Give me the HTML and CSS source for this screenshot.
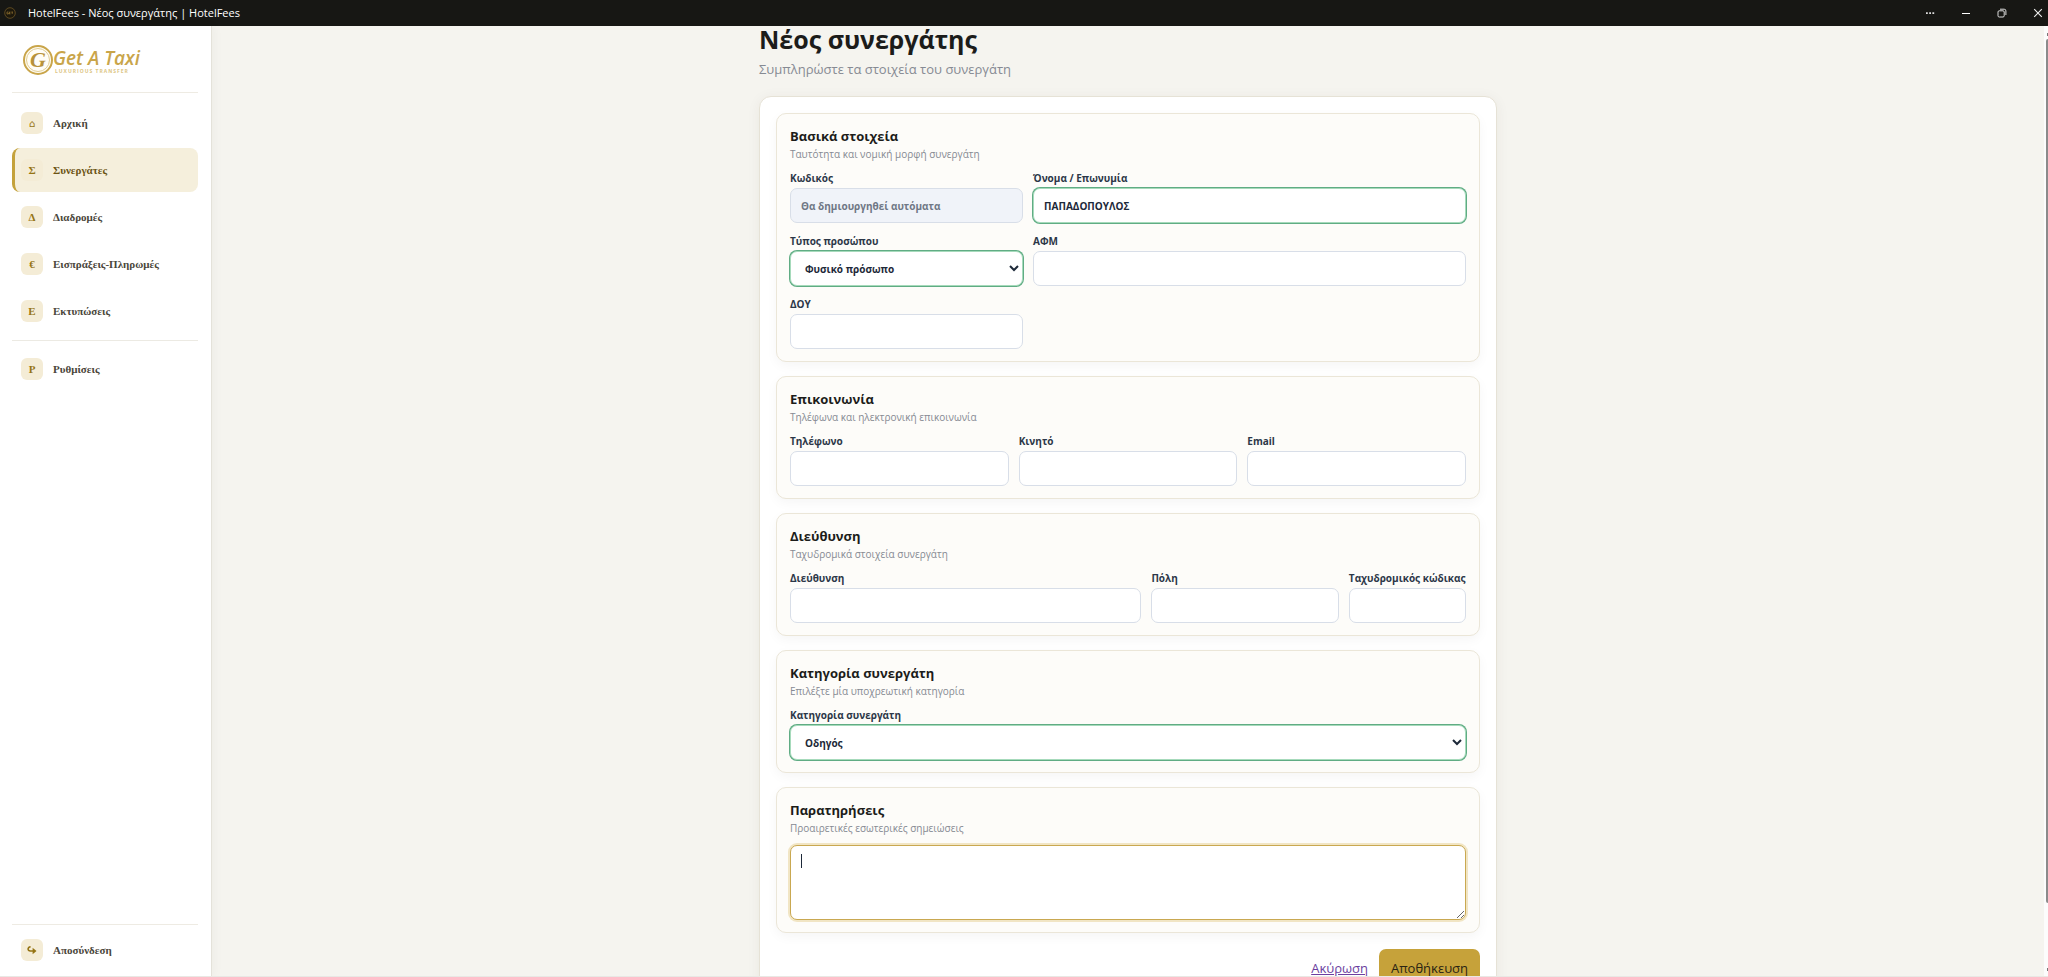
FILE: index.html
```html
<!DOCTYPE html>
<html lang="el">
<head>
<meta charset="utf-8">
<title>HotelFees - Νέος συνεργάτης | HotelFees</title>
<link rel="stylesheet" href="styles.css">
</head>
<body>
<div class="window">
  <header class="titlebar">
    <svg class="app-icon" viewBox="0 0 12 12" width="12" height="12" aria-hidden="true"><circle cx="6" cy="6" r="5.3" fill="#1d180c" stroke="#6d5626" stroke-width=".8"/><path d="M3 5h1.4M3 5v2h1.4V6M5.4 5v2M5.4 5h1M5.4 6h1M5.4 7h1M7.4 5H9M8.2 5v2" fill="none" stroke="#a8853a" stroke-width=".6"/></svg>
    <span class="window-title">HotelFees - Νέος συνεργάτης | HotelFees</span>
    <button class="win-btn" aria-label="Περισσότερα"><svg width="12" height="12" viewBox="0 0 12 12"><path d="M2 5.200h1.800v1.800H2zM5.200 5.200h1.800v1.800H5.200zM8.400 5.200h1.800v1.800H8.400z" fill="#ddd"/></svg></button>
    <button class="win-btn" aria-label="Ελαχιστοποίηση"><svg width="12" height="12" viewBox="0 0 12 12"><path d="M2 6.500h8" stroke="#fff"/></svg></button>
    <button class="win-btn" aria-label="Επαναφορά"><svg width="12" height="12" viewBox="0 0 12 12"><path d="M2 5a1.200 1.200 0 0 1 1.200-1.200H7A1.200 1.200 0 0 1 8.200 5v3.800A1.200 1.200 0 0 1 7 10H3.200A1.200 1.200 0 0 1 2 8.800zM4 2.200h4.200a1.700 1.700 0 0 1 1.700 1.700V8" fill="none" stroke="#ddd"/></svg></button>
    <button class="win-btn" aria-label="Κλείσιμο"><svg width="12" height="12" viewBox="0 0 12 12"><path d="M2.200 2.200l7.600 7.600M9.800 2.200L2.200 9.800" stroke="#eee" stroke-width="1.100"/></svg></button>
  </header>
  <div class="shell">
    <aside class="sidebar">
      <a class="brand" href="#" aria-label="Get A Taxi">
        <svg width="122" height="32" viewBox="0 0 122 32">
          <circle cx="16" cy="16" r="14" fill="#fffdf6" stroke="#c9a54a" stroke-width="2"/>
          <circle cx="16" cy="16" r="11.500" fill="none" stroke="#e2cd92" stroke-width="1"/>
          <text class="logo-g" x="16" y="23" text-anchor="middle">G</text>
          <text class="logo-name" x="31" y="21">Get A Taxi</text>
          <text class="logo-sub" x="33" y="29">LUXURIOUS TRANSFER</text>
        </svg>
      </a>
      <nav class="nav">
        <a class="nav-item" href="#"><span class="nav-icon home">⌂</span>Αρχική</a>
        <a class="nav-item active" href="#" aria-current="page"><span class="nav-icon">Σ</span>Συνεργάτες</a>
        <a class="nav-item" href="#"><span class="nav-icon">Δ</span>Διαδρομές</a>
        <a class="nav-item" href="#"><span class="nav-icon">€</span>Εισπράξεις-Πληρωμές</a>
        <a class="nav-item" href="#"><span class="nav-icon">Ε</span>Εκτυπώσεις</a>
        <hr class="nav-line">
        <a class="nav-item" href="#"><span class="nav-icon">Ρ</span>Ρυθμίσεις</a>
      </nav>
      <div class="sidebar-foot">
        <a class="nav-item" href="#"><span class="nav-icon"><svg width="10" height="10" viewBox="0 0 10 10"><path d="M3.600 1.700C.3 2.200.3 6 3.400 6H7" fill="none" stroke="#957414" stroke-width="1.600"/><path d="M5.600 2.800L9.500 6 5.600 9.200z" fill="#957414"/></svg></span>Αποσύνδεση</a>
      </div>
    </aside>
    <main class="main">
      <div class="page">
        <h1 class="page-title">Νέος συνεργάτης</h1>
        <p class="page-sub">Συμπληρώστε τα στοιχεία του συνεργάτη</p>
        <form class="card">
          <section class="section">
            <h2 class="section-title">Βασικά στοιχεία</h2>
            <p class="section-sub">Ταυτότητα και νομική μορφή συνεργάτη</p>
            <div class="grid grid-basic">
              <div class="field"><label class="label" for="code">Κωδικός</label><input class="control locked" id="code" value="Θα δημιουργηθεί αυτόματα" readonly></div>
              <div class="field"><label class="label" for="name">Όνομα / Επωνυμία</label><input class="control valid" id="name" value="ΠΑΠΑΔΟΠΟΥΛΟΣ"></div>
              <div class="field"><label class="label" for="kind">Τύπος προσώπου</label><select class="control valid" id="kind"><option>Φυσικό πρόσωπο</option></select></div>
              <div class="field"><label class="label" for="afm">ΑΦΜ</label><input class="control" id="afm"></div>
              <div class="field"><label class="label" for="doy">ΔΟΥ</label><input class="control" id="doy"></div>
            </div>
          </section>
          <section class="section">
            <h2 class="section-title">Επικοινωνία</h2>
            <p class="section-sub">Τηλέφωνα και ηλεκτρονική επικοινωνία</p>
            <div class="grid grid-contact">
              <div class="field"><label class="label" for="phone">Τηλέφωνο</label><input class="control" id="phone"></div>
              <div class="field"><label class="label" for="mobile">Κινητό</label><input class="control" id="mobile"></div>
              <div class="field"><label class="label" for="email">Email</label><input class="control" id="email" type="email"></div>
            </div>
          </section>
          <section class="section">
            <h2 class="section-title">Διεύθυνση</h2>
            <p class="section-sub">Ταχυδρομικά στοιχεία συνεργάτη</p>
            <div class="grid grid-address">
              <div class="field"><label class="label" for="street">Διεύθυνση</label><input class="control" id="street"></div>
              <div class="field"><label class="label" for="city">Πόλη</label><input class="control" id="city"></div>
              <div class="field"><label class="label" for="zip">Ταχυδρομικός κώδικας</label><input class="control" id="zip"></div>
            </div>
          </section>
          <section class="section">
            <h2 class="section-title">Κατηγορία συνεργάτη</h2>
            <p class="section-sub">Επιλέξτε μία υποχρεωτική κατηγορία</p>
            <div class="field"><label class="label" for="category">Κατηγορία συνεργάτη</label><select class="control valid" id="category"><option>Οδηγός</option></select></div>
          </section>
          <section class="section">
            <h2 class="section-title">Παρατηρήσεις</h2>
            <p class="section-sub">Προαιρετικές εσωτερικές σημειώσεις</p>
            <div class="notes-wrap"><textarea class="notes" aria-label="Παρατηρήσεις"></textarea><span class="caret"></span></div>
          </section>
          <div class="actions">
            <a class="cancel" href="#">Ακύρωση</a>
            <button class="save" type="button">Αποθήκευση</button>
          </div>
        </form>
      </div>
    </main>
    <div class="scroll-track" aria-hidden="true"><span class="scroll-arrow"></span><span class="scroll-thumb"></span><span class="scroll-arrow"></span></div>
  </div>
</div>
</body>
</html>
```
FILE: styles.css
```css
* { box-sizing: border-box; }
body { margin: 0; font-family: "Open Sans", "Noto Sans", sans-serif; color: #1c1c1a; background: #f5f4ef; }
h1, h2, p { margin: 0; }
.window { height: 100vh; display: flex; flex-direction: column; overflow: hidden; border-bottom: 1px solid #e9e8e4; }
.titlebar { flex: none; height: 26px; display: flex; align-items: center; background: #171714; color: #fff; padding-left: 4px; }
.window-title { flex: 1; margin-left: 12px; font-size: 11px; line-height: 26px; }
.win-btn { width: 36px; height: 26px; padding: 0; border: 0; background: none; display: grid; place-items: center; }
.win-btn:last-child { margin-right: -8px; }
.shell { flex: 1; min-height: 0; display: flex; }

.sidebar { flex: none; width: 212px; padding: 0 13px 4px 12px; display: flex; flex-direction: column; background: #fff; border-right: 1px solid #e4e2da; box-shadow: 2px 0 10px rgba(60, 50, 20, .04); font-family: "Liberation Serif", serif; }
.brand { display: block; height: 67px; padding: 18px 0 0 10px; border-bottom: 1px solid #eeebe3; }
.brand svg { display: block; }
.logo-g { font: italic bold 22px "Liberation Serif", serif; fill: #b8923a; }
.logo-name { font: italic 600 19px "Open Sans", sans-serif; fill: #c9a54a; }
.logo-sub { font: bold 5px "Open Sans", sans-serif; letter-spacing: 1px; fill: #dcc584; }
.nav { flex: 1; display: flex; flex-direction: column; gap: 3px; padding-top: 8px; }
.nav-item { display: flex; align-items: center; gap: 10px; height: 44px; padding-left: 6px; border-left: 3px solid transparent; border-radius: 8px; color: #4a463a; font-size: 11px; font-weight: bold; text-decoration: none; }
.nav-item.active { background: #f5efdc; border-left-color: #c4a23c; color: #6b5414; }
.nav-icon { width: 22px; height: 22px; border-radius: 6px; background: #f4ecd6; color: #957414; display: grid; place-items: center; font-size: 11px; }
.nav-icon.home { font-family: "DejaVu Sans", sans-serif; font-size: 10px; font-weight: normal; }
.nav-line { width: 100%; margin: 4px 0 3px; border: 0; border-top: 1px solid #eceae3; }
.sidebar-foot { border-top: 1px solid #eeebe3; padding-top: 3px; }

.main { flex: 1; min-width: 0; }
.page { width: 738px; max-width: 100%; margin: 0 auto; }
.page-title { font-size: 25px; line-height: 26px; font-weight: 700; }
.page-sub { margin-top: 8px; font-size: 13px; line-height: 18px; color: #868a93; }
.card { margin-top: 18px; padding: 16px; display: flex; flex-direction: column; gap: 14px; background: #fff; border: 1px solid #e6e2d6; border-radius: 12px; box-shadow: 0 2px 14px rgba(60, 50, 20, .06); }
.section { padding: 12px 13px; background: #fdfcf9; border: 1px solid #ebe6d8; border-radius: 10px; box-shadow: 0 4px 12px rgba(30, 30, 30, .04); }
.section-title { font-size: 13px; line-height: 20px; font-weight: 700; }
.section-sub { margin-bottom: 9px; font-size: 10px; line-height: 16px; color: #868a93; }
.grid { display: grid; gap: 11px 10px; }
.grid-basic { grid-template-columns: 7fr 13fr; }
.grid-contact { grid-template-columns: repeat(3, 1fr); }
.grid-address { grid-template-columns: 15fr 8fr 5fr; }
.field { min-width: 0; display: flex; flex-direction: column; gap: 3px; }
.label { font-size: 10px; line-height: 14px; font-weight: 700; color: #2c3748; white-space: nowrap; }
.control { width: 100%; height: 35px; padding: 0 10px; border: 1px solid #d8dee8; border-radius: 7px; background: #fff; color: #1d2939; font: 700 10px "Open Sans", "Noto Sans", sans-serif; outline: none; }
.control.locked { background: #f0f3f9; color: #6f7785; }
.control.valid { border-color: #a6dabb; box-shadow: 0 0 0 1px #60ac84; }
.notes-wrap { position: relative; display: flex; }
.notes { width: 100%; height: 75px; padding: 8px 10px; border: 1px solid #c9a851; border-radius: 7px; background: #fff; box-shadow: 0 0 0 2px #f1e5c4; outline: none; resize: vertical; font: 700 10px "Open Sans", "Noto Sans", sans-serif; }
.caret { position: absolute; left: 11px; top: 9px; width: 1px; height: 14px; background: #1d2939; }
.actions { display: flex; justify-content: flex-end; align-items: center; gap: 11px; margin-top: 2px; }
.cancel { font-size: 13px; color: #6b3fa0; }
.save { height: 38px; padding: 0 12px; border: 0; border-radius: 7px; background: #c6a23a; color: #2a2413; font: 13px "Open Sans", "Noto Sans", sans-serif; }

.scroll-track { flex: none; width: 4px; background: #fcfcfc; display: flex; flex-direction: column; align-items: flex-end; gap: 3px; padding: 7px 0 5px; }
.scroll-arrow { width: 1px; height: 3px; background: #777; }
.scroll-thumb { width: 2px; flex: 1; margin-bottom: 62px; border-radius: 2px 0 0 2px; background: #8b8b8b; }
```
